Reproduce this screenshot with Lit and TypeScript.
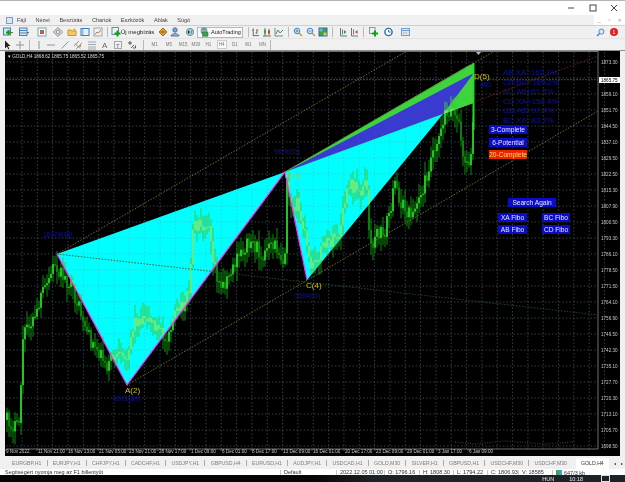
import { LitElement, html, svg, css } from 'lit';
import { customElement } from 'lit/decorators.js';

// price path of the candles, page coordinates
const path: [number, number][] = [
  [7, 420], [12, 425], [17, 428], [20, 420], [22, 345], [27, 325], [35, 320], [42, 295], [47, 285], [55, 262],
  [60, 272], [70, 285], [80, 310], [90, 340], [100, 352], [107, 365], [115, 355], [125, 362], [130, 340],
  [135, 322], [145, 315], [155, 325], [162, 335], [165, 340], [172, 320], [180, 310], [190, 290], [193, 225],
  [210, 222], [212, 250], [220, 290], [240, 255], [250, 240], [262, 255], [275, 245], [284, 262], [285, 250],
  [287, 176], [290, 200], [297, 205], [305, 235], [310, 268], [315, 265], [320, 250], [325, 245], [333, 240],
  [340, 235], [345, 200], [350, 185], [360, 190], [367, 185], [368, 215], [370, 252], [375, 235], [385, 230],
  [392, 200], [395, 185], [402, 205], [408, 215], [415, 210], [425, 182], [433, 150], [440, 130], [445, 112],
  [452, 110], [458, 122], [462, 142], [464, 168], [470, 160], [473, 125], [474, 80],
];

function priceAt(x: number) {
  for (let i = 1; i < path.length; i++) {
    if (x <= path[i][0]) {
      const [x0, y0] = path[i - 1];
      const [x1, y1] = path[i];
      return y0 + ((y1 - y0) * (x - x0)) / (x1 - x0);
    }
  }
  return path[path.length - 1][1];
}

let seed = 17;
function rnd() {
  seed = (seed * 16807) % 2147483647;
  return seed / 2147483647;
}

const candles: { x: number; hi: number; lo: number; top: number; h: number; up: boolean }[] = [];
let prev = 420;
for (let x = 7; x <= 474; x += 2) {
  const y = priceAt(x) + (rnd() - 0.5) * 15;
  const top = Math.min(prev, y);
  const bot = Math.max(prev, y);
  candles.push({ x, hi: top - 2 - rnd() * 12, lo: bot + 2 + rnd() * 12, top, h: Math.max(bot - top, 1), up: y < prev });
  prev = y;
}

const prices = [
  '1873.30', '', '1859.10', '1851.70', '1844.50', '1837.10', '1829.50', '1822.50', '1815.30', '1807.90', '1800.50',
  '1793.30', '1786.10', '1778.50', '1771.50', '1764.10', '1756.90', '1749.50', '1742.30', '1735.10', '1727.70',
  '1720.30', '1713.10', '1705.70', '1698.50',
];

const times: [number, string][] = [
  [6, '9 Nov 2022'], [38, '11 Nov 21:00'], [68, '16 Nov 13:00'], [99, '21 Nov 05:00'], [129, '23 Nov 21:00'],
  [159, '28 Nov 17:00'], [191, '1 Dec 09:00'], [222, '6 Dec 01:00'], [252, '8 Dec 17:00'], [283, '13 Dec 09:00'],
  [313, '16 Dec 01:00'], [345, '20 Dec 17:00'], [376, '23 Dec 09:00'], [407, '29 Dec 01:00'], [438, '3 Jan 17:00'],
  [469, '6 Jan 09:00'],
];

const ratios = ['AB:XA=162.7%', 'CD:BC=169.2%', 'BC:AB=51.5%', 'CD:XA=158.4%', 'CD:AB=97.4%', 'BC:XA=83.7%'];

// x, y, w, h, label
const buttons: [number, number, number, number, string, string?][] = [
  [489, 125, 38, 9, '3-Complete'],
  [489, 138, 38, 9, '6-Potential'],
  [489, 150, 38, 9, '20-Complete', 'red'],
  [508, 198, 48, 9, 'Search Again'],
  [498, 213, 29, 9, 'XA Fibo'],
  [542, 213, 28, 9, 'BC Fibo'],
  [498, 225, 29, 9, 'AB Fibo'],
  [542, 225, 28, 9, 'CD Fibo'],
];

const tabs = [
  'EURGBP,H1', 'EURJPY,H1', 'CHFJPY,H1', 'CADCHF,H1', 'USDJPY,H1', 'GBPUSD,H4', 'EURUSD,H1', 'AUDJPY,H1',
  'USDCAD,H1', 'GOLD,M30', 'SILVER,H1', 'GBPUSD,H1', 'USDCHF,M30', 'USDCHF,M30',
];

const menu = ['Fájl', 'Nézet', 'Beszúrás', 'Chartok', 'Eszközök', 'Ablak', 'Súgó'];

const i = (body: unknown) => html`<svg width="10" height="10" viewBox="0 0 10 10">${body}</svg>`;
const sep = html`<span class="sep"></span>`;
const caret = svg`<path d="M8 5h2L9 6.5z" fill="#333"/>`;

const icons = {
  newChart: i(svg`<rect x="0.5" y="1" width="7" height="7" fill="#cfe3f5" stroke="#4a7fb5"/><path d="M3 5.5h5M5.5 3v5" stroke="#12a012" stroke-width="2"/>${caret}`),
  profiles: i(svg`<rect x="0.5" y="1" width="7.5" height="7.5" fill="#dbe8f6" stroke="#4a7fb5"/><path d="M1 3.5h6.5M1 6h6.5" stroke="#4a7fb5"/>${caret}`),
  market: i(svg`<rect x="1" y="1" width="8" height="8" fill="#fff" stroke="#7a9cbd"/><rect x="3" y="3" width="4" height="4" fill="#c9583a"/><path d="M3 3h2v2H3z" fill="#3aa04a"/>`),
  nav: i(svg`<path d="M5 .5 9.5 5 5 9.5.5 5z" fill="#cfd6dc" stroke="#8a949c"/><circle cx="5" cy="5" r="1.6" fill="#fff" stroke="#8a949c"/>`),
  folder: i(svg`<path d="M1 3h3l1 1h4v4.5H1z" fill="#f4c95c" stroke="#c39a32"/><circle cx="7.5" cy="3" r="1.5" fill="#e8b33c"/>`),
  term: i(svg`<rect x="1" y="1.5" width="8" height="7" fill="#e6f0fa" stroke="#3f7fc0"/><rect x="1.5" y="2" width="2" height="6" fill="#8fbbe6"/>`),
  tester: i(svg`<rect x="1" y="1" width="8" height="8" fill="#eef2f5" stroke="#9aa6b0"/><path d="M2 7.5 4 5l1.5 1L8 2.5" stroke="#c07a3a" fill="none"/>`),
  order: i(svg`<rect x="1" y="0.5" width="6.5" height="7" fill="#eef3f8" stroke="#6d8aa6"/><path d="M3.5 6.5h6M6.5 3.5v6" stroke="#12a012" stroke-width="2"/>`),
  gem: i(svg`<path d="M5 1 9 5 5 9 1 5z" fill="#e0a030" stroke="#9c6a1a"/><path d="M3 5h4" stroke="#7a5010"/>`),
  user: i(svg`<circle cx="5" cy="3" r="2.2" fill="#7fa6d8" stroke="#4a6f9c"/><path d="M1 9c0-3 8-3 8 0z" fill="#a9c4e6" stroke="#4a6f9c"/>`),
  globe: i(svg`<circle cx="5" cy="5" r="3.6" fill="#a9cfe8" stroke="#6d8aa6"/><path d="M3 3.5c2 0 2 3 0 3M7 3l-1 4" stroke="#5ea05e"/>`),
  auto: i(svg`<circle cx="5" cy="4" r="3.4" fill="#4f9fd8"/><path d="M2 4h6" stroke="#f2c230"/><rect x="3.5" y="5" width="5.5" height="4.2" fill="#3aa04a" stroke="#1f7030" stroke-width=".5"/>`),
  bar: i(svg`<path d="M2.5 1v8M2 9h7M6.5 2v5" stroke="#4d6b4d" fill="none"/><path d="M1 3h1.5M6.5 3H8M5 6h1.5" stroke="#4d6b4d"/>`),
  candle: i(svg`<path d="M3 1v8M7 2v6M1 9h8" stroke="#59725d"/><rect x="2" y="3" width="2" height="3.5" fill="#3aa04a"/><rect x="6" y="3.5" width="2" height="3" fill="#d23a3a"/>`),
  line: i(svg`<path d="M1 1v8h8" stroke="#7b8790" fill="none"/><path d="M2 7l2-4 2 3 3-3" stroke="#4d8a5a" fill="none"/>`),
  zoomIn: i(svg`<circle cx="4" cy="4" r="2.8" fill="#d6e8f7" stroke="#3f7fc0"/><path d="M6 6l3 3" stroke="#c79a3a" stroke-width="1.5"/><path d="M2.5 4h3M4 2.5v3" stroke="#2d6aa8" stroke-width=".7"/>`),
  zoomOut: i(svg`<circle cx="4" cy="4" r="2.8" fill="#d6e8f7" stroke="#3f7fc0"/><path d="M6 6l3 3" stroke="#c79a3a" stroke-width="1.5"/><path d="M2.5 4h3" stroke="#2d6aa8" stroke-width=".7"/>`),
  tile: i(svg`<rect x="1" y="1" width="8" height="8" fill="#3aa04a" stroke="#2d6aa8"/><rect x="1.5" y="1.5" width="3" height="3" fill="#6fb2e8"/><rect x="5.5" y="5.5" width="3" height="3" fill="#e6c24a"/>`),
  autoscroll: i(svg`<path d="M2.5 1v8h6.5" stroke="#6a7a70" fill="none"/><path d="M4.5 2.5v5" stroke="#6a7a70"/><path d="M6 3v4l2.5-2z" fill="#2fa040"/>`),
  shift: i(svg`<path d="M2.5 1v8h6.5" stroke="#6a7a70" fill="none"/><path d="M4.5 2.5v5" stroke="#6a7a70"/><path d="M8.5 3v4L6 5z" fill="#d23a3a"/>`),
  indicator: i(svg`<rect x="0.5" y="0.5" width="5.5" height="6" fill="#eef2f5" stroke="#8a949c"/><path d="M3 6.5h6M6 3.5v6" stroke="#12a012" stroke-width="2"/>`),
  clock: i(svg`<circle cx="4.5" cy="5" r="3.6" fill="#fff" stroke="#2d6aa8" stroke-width="1.4"/><path d="M4.5 3v2h2" stroke="#2d6aa8" fill="none"/>`),
  template: i(svg`<rect x="0.5" y="1.5" width="8" height="7" fill="#d6e8f7" stroke="#6fa0d0"/><path d="M1 3.5h7" stroke="#6fa0d0"/><path d="M2 6h1.5M4.5 6H6" stroke="#d09a5a"/>`),
  cursor: i(svg`<path d="M3 .5v8l2-2 1.3 3 1-.5L6 6h2.5z" fill="#222"/>`),
  cross: i(svg`<path d="M5 1v8M1 5h8" stroke="#8a949c"/>`),
  vline: i(svg`<path d="M5 1v8" stroke="#8a949c"/>`),
  hline: i(svg`<path d="M1 5h8" stroke="#8a949c"/>`),
  trend: i(svg`<path d="M1.5 8.5l7-7" stroke="#8a949c"/>`),
  channel: i(svg`<path d="M1 6l5-5M3 9l6-6M2 3.5l5 5" stroke="#8a949c"/><circle cx="7" cy="6" r="1.2" fill="#c79a3a"/>`),
  fibo: i(svg`<path d="M1 2h8M1 4.5h8M1 7h8M1 9h8" stroke="#a0a8ae"/>`),
  text: i(svg`<text x="2" y="8" font-size="8" font-family="Liberation Sans, sans-serif" fill="#666">A</text>`),
  label: i(svg`<rect x="1.5" y="1.5" width="7" height="7" fill="none" stroke="#a0a8ae"/><text x="3" y="7.5" font-size="6" font-family="Liberation Sans, sans-serif" fill="#666">T</text>`),
  arrows: i(svg`<path d="M1 3h4M3 1v4M4 8l3-3" stroke="#556"/><path d="M6 8h2.5V5.5" stroke="#556" fill="none"/>`),
};

const tb1: [number, unknown][] = [
  [13, icons.newChart], [31, icons.profiles], [50, icons.market], [66, icons.nav], [79, icons.folder], [92, icons.term],
  [106, icons.tester], [114, sep], [122, icons.order],
];
const tb1b: [number, unknown][] = [
  [168, icons.gem], [182, icons.user], [196, icons.globe],
];
const tb1c: [number, unknown][] = [
  [255, sep], [261, icons.bar], [273, icons.candle], [287, icons.line], [295, sep], [304, icons.zoomIn],
  [318, icons.zoomOut], [331, icons.tile], [340, sep], [348, icons.autoscroll], [362, icons.shift], [370, sep],
  [378, icons.indicator], [396, icons.clock], [413, icons.template],
];
const tb2: [number, unknown][] = [
  [12, icons.cursor], [27, icons.cross], [36, sep], [43, icons.vline], [57, icons.hline], [71, icons.trend],
  [84, icons.channel], [98, icons.fibo], [111, icons.text], [124, icons.label], [138, icons.arrows], [152, sep],
];
const periods: [number, string][] = [
  [160, 'M1'], [175, 'M5'], [190, 'M15'], [202, 'M30'], [214, 'H1'], [228, 'H4'], [241, 'D1'], [254, 'W1'], [268, 'MN'],
];

// place items by their centre, each slot filling half the way to its neighbours
function slots(items: [number, unknown][], from: number, to: number) {
  return items.map(([c, content], n) => {
    const l = n === 0 ? from : (items[n - 1][0] + c) / 2;
    const r = n === items.length - 1 ? to : (items[n + 1][0] + c) / 2;
    return html`<div class="slot" style="width:${r - l}px;padding-left:${n === 0 ? 2 * (c - l) - (r - l) : 0}px">${content}</div>`;
  });
}

const series = svg`${candles.map(
  (c) => svg`<path class="wick" d="M${c.x} ${c.hi}V${c.lo}"/><rect class=${c.up ? 'body' : 'body down'} x=${c.x - 0.8} y=${c.top} width="1.6" height=${c.h}/>`,
)}`;

const overlay = svg`${candles.map(
  (c) => svg`<path d="M${c.x} ${c.hi}V${c.lo}"/><rect x=${c.x - 0.7} y=${c.top} width="1.4" height=${c.h}/>`,
)}`;

const gridV = Array.from({ length: 39 }, (_, n) => 22 + n * 15.33);
const gridH = Array.from({ length: 25 }, (_, n) => 62 + n * 16);

@customElement('app-root')
export class AppRoot extends LitElement {
  static styles = css`
    :host {
      display: block;
      width: 625px;
      height: 482px;
      overflow: hidden;
      background: #f0f0f0;
      font-family: 'Liberation Sans', Arial, sans-serif;
      font-size: 5.5px;
      color: #333;
    }
    .page {
      display: flex;
      flex-direction: column;
      height: 482px;
      filter: blur(0.3px);
    }
    .title {
      height: 14px;
      background: #fff;
      border-top: 1px solid #b4b4b4;
      display: flex;
      justify-content: flex-end;
      align-items: center;
    }
    .winbtn {
      width: 21.5px;
      display: flex;
      justify-content: center;
    }
    .menubar {
      height: 10px;
      display: flex;
      align-items: center;
      padding-left: 6px;
    }
    .appicon {
      width: 7px;
      height: 7px;
      border: 1px solid #6fa0d0;
      background: #d6e8f7;
      box-sizing: border-box;
      margin-right: 4px;
    }
    .menuitems {
      display: flex;
      gap: 9.6px;
      color: #444;
    }
    .mdi {
      margin-left: auto;
      width: 31px;
      height: 10px;
      background: #fff;
      display: flex;
      align-items: center;
      justify-content: space-around;
      color: #888;
    }
    .bar1 {
      height: 12px;
      display: flex;
      align-items: center;
      border-top: 1px solid #d0d0d0;
    }
    .bar2 {
      height: 11px;
      display: flex;
      align-items: center;
      border-top: 1px solid #e4e4e4;
      border-bottom: 1px solid #8e8e8e;
    }
    .slot {
      display: flex;
      justify-content: center;
      align-items: center;
      flex: none;
      height: 100%;
      box-sizing: border-box;
    }
    .sep {
      display: block;
      width: 1px;
      height: 10px;
      background: #b9b9b9;
    }
    .order-label {
      width: 37px;
      flex: none;
      font-size: 6px;
      color: #222;
      white-space: nowrap;
    }
    .auto {
      width: 46px;
      height: 11px;
      flex: none;
      border: 1px solid #b8b8b8;
      background: #fafafa;
      box-sizing: border-box;
      display: flex;
      align-items: center;
      gap: 2px;
      padding-left: 1px;
      color: #222;
      white-space: nowrap;
    }
    .right {
      margin-left: auto;
      display: flex;
      align-items: center;
      gap: 5px;
      padding-right: 7px;
    }
    .notify {
      width: 8px;
      height: 8px;
      border-radius: 50%;
      background: #e02020;
      color: #fff;
      font-size: 5px;
      display: flex;
      align-items: center;
      justify-content: center;
    }
    .period {
      color: #777;
      font-size: 4.5px;
    }
    .period.on {
      background: #fafafa;
      border: 1px solid #ccc;
      padding: 1px;
    }
    .chartwrap {
      height: 405px;
      padding: 0 5px;
    }
    svg.chart {
      display: block;
      background: #000;
      font-family: 'Liberation Sans', Arial, sans-serif;
    }
    .grid {
      stroke: #4a5a60;
      stroke-width: 0.7;
      stroke-dasharray: 1.5 2;
    }
    .wick {
      stroke: #0c8c0c;
      stroke-width: 1;
    }
    .body {
      fill: #2ee02e;
    }
    .body.down {
      fill: #0d900d;
    }
    .over path {
      stroke: #3fc83f;
      stroke-width: 1;
    }
    .over rect {
      fill: #7cf07c;
    }
    .cyangrid {
      stroke: #3ac8c8;
      stroke-width: 0.7;
      stroke-dasharray: 1.5 2;
    }
    .dots {
      fill: none;
      stroke: #8a8a20;
      stroke-width: 0.8;
      stroke-dasharray: 1.5 1.5;
    }
    .zz {
      stroke: #ff2cff;
      stroke-width: 1.2;
      fill: none;
    }
    .axis {
      fill: #c8c8c8;
      font-size: 4.6px;
    }
    .ohlc {
      fill: #dcdcdc;
      font-size: 4.6px;
    }
    .point {
      fill: #c9c21e;
      font-size: 8px;
    }
    .note {
      fill: #0a12a8;
      font-size: 6.5px;
    }
    .ratio {
      fill: #0a12a8;
      font-size: 7.9px;
    }
    .btn {
      fill: #0c0cc8;
    }
    .btn.red {
      fill: #f02000;
    }
    .btntext {
      fill: #e8e8f8;
      font-size: 6.6px;
      text-anchor: middle;
    }
    .btntext.red {
      fill: #f0e060;
    }
    .tabs {
      height: 12px;
      margin-top: 1px;
      display: flex;
      align-items: center;
      padding-left: 12px;
      color: #7d7d7d;
      font-size: 5.2px;
      white-space: nowrap;
      overflow: hidden;
    }
    .tab {
      border-right: 1px solid #aaa;
      padding-right: 5.2px;
      margin-right: 5.2px;
      flex: none;
    }
    .tab.last {
      margin-right: 9px;
      border-right: 0;
      padding-right: 0;
    }
    .tab.active {
      background: #fff;
      color: #333;
      border: 0;
      height: 11px;
      line-height: 11px;
      padding: 0 0 0 5px;
      margin: 0;
      width: 28px;
    }
    .tabarrow {
      margin-left: 5px;
      color: #222;
      font-size: 4px;
      flex: none;
    }
    .status {
      height: 5px;
      background: #fff;
      display: flex;
      overflow: hidden;
      line-height: 5px;
      padding-top: 1px;
      color: #333;
      white-space: nowrap;
    }
    .hint {
      width: 275px;
      padding-left: 5px;
      flex: none;
    }
    .stat {
      flex: none;
      border-left: 1px solid #c8c8c8;
      padding-left: 3px;
    }
    .meter {
      display: inline-block;
      width: 6px;
      height: 5px;
      background: linear-gradient(90deg, #3aa04a, #4f9fd8);
      margin-right: 2px;
    }
    .taskbar {
      flex: 1;
      background: linear-gradient(90deg, #050505 0 50%, #1d2226 60%);
      display: flex;
      align-items: center;
      justify-content: flex-end;
      color: #e8e8e8;
      font-size: 5.5px;
      overflow: hidden;
      padding-right: 15px;
      gap: 15px;
    }
    .box {
      width: 7px;
      height: 5px;
      border: 1px solid #ddd;
      margin-left: 3px;
    }
  `;

  render() {
    return html`<div class="page">
      <div class="title">
        <div class="winbtn"><svg width="8" height="8"><path d="M1 4h6" stroke="#444"/></svg></div>
        <div class="winbtn"><svg width="8" height="8"><rect x="1" y="1" width="6" height="6" fill="none" stroke="#444"/></svg></div>
        <div class="winbtn"><svg width="8" height="8"><path d="M1 1l6 6M7 1 1 7" stroke="#444"/></svg></div>
      </div>
      <div class="menubar">
        <div class="appicon"></div>
        <div class="menuitems">${menu.map((m) => html`<span>${m}</span>`)}</div>
        <div class="mdi"><span>_</span><span>▫</span><span>×</span></div>
      </div>
      <div class="bar1">
        ${slots(tb1, 7, 128)}
        <div class="order-label">Új megbízás</div>
        ${slots(tb1b, 165, 204)}
        <div class="auto">${icons.auto}<span>AutoTrading</span></div>
        ${slots(tb1c, 250, 422)}
        <div class="right">
          <svg width="9" height="9" viewBox="0 0 10 10"><circle cx="6" cy="4" r="2.8" fill="#d6e8f7" stroke="#3f7fc0"/><path d="M4 6 1 9" stroke="#3f7fc0" stroke-width="1.5"/></svg>
          <div class="notify">1</div>
        </div>
      </div>
      <div class="bar2">
        ${slots(tb2, 6, 154)}
        ${slots(periods.map(([x, p]) => [x, html`<span class="period ${p === 'H4' ? 'on' : ''}">${p}</span>`] as [number, unknown]), 154, 276)}
        <span class="sep"></span>
      </div>
      <div class="chartwrap">${this.chart()}</div>
      <div class="tabs">
        ${tabs.map((t, n) => html`<span class="tab ${n === tabs.length - 1 ? 'last' : ''}">${t}</span>`)}
        <span class="tab active">GOLD,H4</span>
        <span class="tabarrow">◂</span><span class="tabarrow">▸</span>
      </div>
      <div class="status">
        <div class="hint">Segítségért nyomja meg az F1 billentyűt</div>
        <div class="stat" style="width:52px">Default</div>
        <div class="stat" style="width:44px">2022.12.05 01:00</div>
        <div class="stat" style="width:31px">O: 1796.16</div>
        <div class="stat" style="width:30px">H: 1808.30</div>
        <div class="stat" style="width:30px">L: 1794.22</div>
        <div class="stat" style="width:27px">C: 1806.93</div>
        <div class="stat" style="width:30px">V: 18585</div>
        <div class="stat"><span class="meter"></span>647/3 kb</div>
      </div>
      <div class="taskbar"><span>HUN</span><span>10:18</span><span class="box"></span></div>
    </div>`;
  }

  chart() {
    return html`<svg class="chart" width="615" height="405" viewBox="5 51 615 405">
      <defs>
        <clipPath id="fills">
          <polygon points="57,254 127,385 285,172"/>
          <polygon points="285,172 307,280 443,114"/>
          <polygon points="285,172 474,63 474,103 443,114"/>
        </clipPath>
        <clipPath id="cyan">
          <polygon points="57,254 127,385 285,172"/>
          <polygon points="285,172 307,280 443,114"/>
        </clipPath>
      </defs>
      ${gridV.map((x) => svg`<path class="grid" d="M${x} 52V449"/>`)}
      ${gridH.map((y) => svg`<path class="grid" d="M6 ${y}H598"/>`)}
      <path d="M5 51.5H598M598 51V449M6 449H598" stroke="#8c8c8c" fill="none" stroke-width="0.8"/>
      <path d="M6 79.7H598" stroke="#777" stroke-width="0.6" stroke-dasharray="2 1"/>
      ${series}
      <polygon points="285,172 474,63 474,103" fill="#3ed43e"/>
      <polygon points="285,172 474,73 443,114" fill="#3a3ad0"/>
      <polygon points="57,254 127,385 285,172" fill="#00ffff"/>
      <polygon points="285,172 307,280 443,114" fill="#00ffff"/>
      <g clip-path="url(#cyan)">
        ${gridV.map((x) => svg`<path class="cyangrid" d="M${x} 52V449"/>`)}
        ${gridH.map((y) => svg`<path class="cyangrid" d="M6 ${y}H598"/>`)}
        <path d="M57 254 598 315" stroke="#44c8a0" stroke-width="0.8" stroke-dasharray="1.5 1.5"/>
      </g>
      <g class="over" clip-path="url(#fills)">${overlay}</g>
      <path d="M473.5 63V130" stroke="#22dd22" stroke-width="2"/>
      <path d="M470 65 285 172" stroke="#55b030" stroke-width="1" fill="none"/>
      <path class="zz" d="M57 254 127 385 285 172 307 280"/>
      <path class="dots" d="M57 254 407 51M127 385 598 111M470 65 495 51"/>
      <path class="dots" style="stroke:#8c2020" d="M474 102 598 56"/>
      <path class="dots" style="stroke:#2a5a2a" d="M57 254 598 315"/>
      <path d="M455 442l20 2 30-3 40 3 30-2" stroke="#333" stroke-width="1.5" stroke-dasharray="1 1.5" fill="none"/>
      <path d="M476 52h5l-2.5 3z" fill="#9cc0d8"/>

      <text class="ohlc" x="8" y="58">▾ GOLD,H4  1868.62 1865.75 1865.52 1865.75</text>
      ${prices.map((p, n) => svg`<text class="axis" x="601" y=${64 + n * 16}>${p}</text>`)}
      <rect x="599" y="77" width="21" height="6" fill="#fff"/>
      <text x="601" y="82" font-size="4.6" fill="#000">1865.75</text>
      ${times.map(([x, t]) => svg`<text class="axis" x=${x} y="453">${t}</text>`)}
      ${times.map(([x]) => svg`<path d="M${x - 1} 449v2" stroke="#999" stroke-width="0.6"/>`)}

      <text class="note" x="43" y="237">16979(48)</text>
      <text class="point" x="125" y="393">A(2)</text>
      <text class="note" x="114" y="401">8071(39)</text>
      <text class="point" x="285" y="178">B(3)</text>
      <text class="note" x="274" y="154">9879(33)</text>
      <text class="point" x="306" y="288">C(4)</text>
      <text class="note" x="295" y="298">5584(11)</text>
      <text class="point" x="474" y="79">D(5)</text>
      <text class="note" x="480" y="87">480</text>

      ${ratios.map((r, n) => svg`<text class="ratio" x="503" y=${75 + n * 9.6}>${r}</text>`)}
      ${buttons.map(
        ([x, y, w, h, t, c]) => svg`
          <rect class="btn ${c ?? ''}" x=${x} y=${y} width=${w} height=${h}/>
          <text class="btntext ${c ?? ''}" x=${x + w / 2} y=${y + 7}>${t}</text>`,
      )}
    </svg>`;
  }
}
